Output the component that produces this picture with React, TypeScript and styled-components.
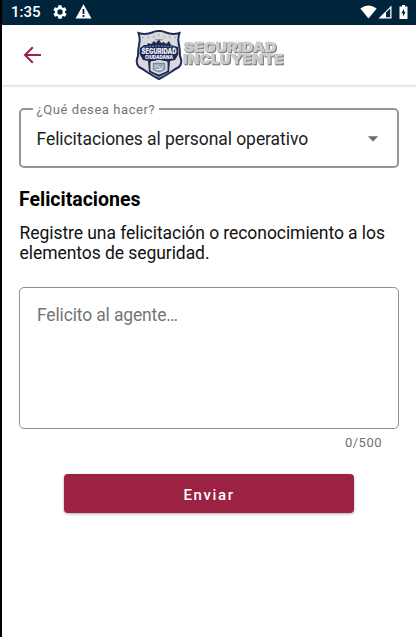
import React from "react";
import styled, { createGlobalStyle } from "styled-components";

const GlobalStyle = createGlobalStyle`
  * { box-sizing: border-box; }
  body { margin: 0; background: #fff; font-family: Roboto, "Liberation Sans", sans-serif; }
`;

const Screen = styled.div`
  width: 100%;
  height: 637px;
  border-left: 2px solid #000;
  background: #fff;
  overflow: hidden;
`;

const StatusBar = styled.header`
  display: flex;
  justify-content: space-between;
  height: 25px;
  padding: 0 8px 0 9px;
  background: #00243b;
  color: #fff;
`;

const StatusGroup = styled.div`
  display: flex;
  align-items: center;
  height: 24px;
`;

const Clock = styled.span`
  width: 41px;
  font-size: 15px;
  font-weight: 500;
  line-height: 26px;
`;

const StatusIcon = styled.svg<{ $gap?: number }>`
  display: block;
  flex: none;
  margin-left: ${(p) => p.$gap ?? 0}px;
  fill: #fff;
`;

const AppBar = styled.nav`
  display: grid;
  grid-template-columns: 133px 152px 1fr;
  height: 60px;
  background: #fff;
  box-shadow: 0 1px 2px rgba(0, 0, 0, 0.2);
`;

const BackButton = styled.button`
  display: flex;
  align-items: center;
  padding: 0 0 0 21px;
  border: 0;
  background: none;
`;

const Logo = styled.svg`
  display: block;
  font-family: Inter, "Liberation Sans", sans-serif;
`;

const Wordmark = styled.g`
  font-size: 13.6px;
  font-weight: 900;
  fill: #cbcccf;
  stroke: #c6c7c9;
  stroke-width: 0.4px;
  filter: drop-shadow(1px 1px 0 #707070);
`;

const Form = styled.main`
  display: flex;
  flex-direction: column;
  padding: 17px 17px 0;
`;

const SelectField = styled.fieldset`
  height: 66px;
  min-width: 0;
  margin: 0;
  padding: 0 18px 0 15.5px;
  border: 2px solid #969696;
  border-radius: 5px;
`;

const FieldLabel = styled.legend`
  margin-left: -4px;
  padding: 0 4px;
  height: 14px;
  font-size: 13px;
  line-height: 15px;
  letter-spacing: 0.57px;
  color: #747474;
`;

const SelectRow = styled.div`
  display: flex;
  align-items: center;
  justify-content: space-between;
  height: 45px;
`;

const SelectValue = styled.span`
  font-size: 17.5px;
  line-height: 22px;
  letter-spacing: -0.07px;
  white-space: nowrap;
  color: #212121;
`;

const Heading = styled.h1`
  margin: 20px 0 0;
  font-size: 19.5px;
  font-weight: 700;
  line-height: 24px;
  color: #000;
`;

const Description = styled.p`
  margin: 11px 0 0;
  padding-left: 0.5px;
  font-size: 17.5px;
  line-height: 20.3px;
  letter-spacing: -0.06px;
  white-space: nowrap;
  color: #111;
`;

const MessageField = styled.textarea`
  display: block;
  width: 100%;
  height: 142px;
  margin: 23.4px 0 0;
  padding: 16px 17px;
  border: 1px solid #919191;
  border-radius: 5px;
  outline: 0;
  resize: none;
  font: 17.5px/22px Roboto, sans-serif;
  letter-spacing: -0.15px;
  &::placeholder { color: #747474; opacity: 1; }
`;

const Counter = styled.span`
  align-self: flex-end;
  margin: 5px 17px 0 0;
  font-size: 13px;
  line-height: 17px;
  letter-spacing: 0.5px;
  color: #707070;
`;

const SubmitButton = styled.button`
  align-self: center;
  width: 290px;
  height: 39px;
  margin: 23px 0 0;
  padding: 3px 0 0;
  border: 0;
  border-radius: 4px;
  background: #9b2242;
  box-shadow: 0 1px 3px rgba(0, 0, 0, 0.32);
  color: #fff;
  font: 500 15px/20px Roboto, sans-serif;
  letter-spacing: 1.6px;
`;

const shield =
  "M3.5 8 Q11 10 17 7.5 Q21 5.5 24 6 Q27 5.5 31 7.5 Q37 10 44.5 8 Q42.5 14 44 20 Q45 25 45 31 Q48 38 44 42 Q40 44 36 47 Q30 51 24 54 Q18 51 12 47 Q8 44 4 42 Q0 38 3 31 Q3 25 4 20 Q5.5 14 3.5 8Z";

function BrandLogo() {
  return (
    <Logo width="152" height="60" viewBox="0 0 152 60" aria-label="Seguridad Incluyente">
      <path d={shield} fill="#d8d8dd" stroke="#202a55" strokeWidth="2" />
      <path d="M5 23 L9 20 L12 20 L13 18 L16 19 L19 16 L21 18 L24 14 L26 18 L29 17 L31 19 L34 16 L36 20 L43 22 L43.5 29 L40 35 L35 36 L34 47 L24 52 L14 47 L13 36 L8 35 L4.500 29Z" fill="#1d2a58" />
      <path d="M7 12.500 Q16 13 24 10 Q32 13 41 12.500" fill="none" stroke="#a9a2a6" strokeWidth="1.500" strokeDasharray="1.500 4" />
      <rect x="20" y="14.300" width="8" height="1" fill="#8c8e9b" />
      <path d="M8 22.500 Q24 19.500 40 22.500" fill="none" stroke="#8790ac" strokeWidth="1" strokeDasharray="2 1" />
      <path d="M16 37 Q24 34 32 37 L32 45.500 Q28 47.500 24 49 Q20 47.500 16 45.500Z" fill="#c4ccd5" stroke="#eef0f3" strokeWidth="1" />
      <path d="M18.500 38.500h11v6l-5.500 2.500-5.500-2.500z" fill="#9ba8b8" stroke="#63718b" strokeWidth=".7" />
      <path d="M19.500 42q3-3 4.500 0t4.500-1M20.500 44.500h7" fill="none" stroke="#e3e7eb" />
      <g fill="#eceef3" fontWeight="900">
        <text x="6.500" y="28.700" fontSize="7" textLength="35" lengthAdjust="spacingAndGlyphs">SEGURIDAD</text>
        <text x="10" y="33.500" fontSize="5.300" textLength="28" lengthAdjust="spacingAndGlyphs">CIUDADANA</text>
      </g>
      <Wordmark>
        <text x="48.500" y="27" textLength="93" lengthAdjust="spacingAndGlyphs">SEGURIDAD</text>
        <text x="48" y="38.700" textLength="100.500" lengthAdjust="spacingAndGlyphs">INCLUYENTE</text>
      </Wordmark>
    </Logo>
  );
}

export default function App() {
  return (
    <>
      <GlobalStyle />
      <Screen>
        <StatusBar>
          <StatusGroup>
            <Clock>1:35</Clock>
            <StatusIcon width="16" height="16" viewBox="0 0 24 24">
              <path d="M19.4 13a7.8 7.8 0 0 0 0-2l2.1-1.7a.5.5 0 0 0 .1-.6l-2-3.5a.5.5 0 0 0-.6-.2l-2.5 1a7.3 7.3 0 0 0-1.7-1l-.4-2.6a.5.5 0 0 0-.5-.4h-4a.5.5 0 0 0-.5.4L9 5a7.3 7.3 0 0 0-1.7 1l-2.5-1a.5.5 0 0 0-.6.2l-2 3.5a.5.5 0 0 0 .1.6L4.5 11a7.8 7.8 0 0 0 0 2l-2.1 1.7a.5.5 0 0 0-.1.6l2 3.5c.1.2.4.3.6.2l2.5-1A7.3 7.3 0 0 0 9 19l.4 2.6c0 .2.2.4.5.4h4c.3 0 .5-.2.5-.4L15 19a7.3 7.3 0 0 0 1.7-1l2.5 1c.2.1.5 0 .6-.2l2-3.500a.5.5 0 0 0-.1-.6zM12 8a4 4 0 1 1 0 8 4 4 0 0 1 0-8z" fillRule="evenodd" />
            </StatusIcon>
            <StatusIcon $gap={7} width="17" height="16" viewBox="0 0 17 16">
              <path fillRule="evenodd" d="M8.500.3 16.500 14.500H.5zM7.600 5v5h1.800V5zm0 6v2h1.800v-2z" />
            </StatusIcon>
          </StatusGroup>
          <StatusGroup>
            <StatusIcon width="17" height="14" viewBox="0 0 17 14">
              <path d="M.3 3.400Q8.500-2.200 16.700 3.400L8.500 13.400z" />
            </StatusIcon>
            <StatusIcon $gap={1} width="14" height="14" viewBox="0 0 14 14">
              <path fillRule="evenodd" d="M.5 13.500 13.500.5v13zM8 7.500v4.800h4.200V3.500z" />
            </StatusIcon>
            <StatusIcon $gap={7} width="9" height="14" viewBox="0 0 9 14">
              <path fillRule="evenodd" d="M3 0h3v1.500h2.500V14H.5V1.500H3zM5 3.700 2.300 8.300H4v3.200l2.700-4.700H5z" />
            </StatusIcon>
          </StatusGroup>
        </StatusBar>
        <AppBar>
          <BackButton aria-label="Volver">
            <svg width="19" height="18" viewBox="0 0 19 18" fill="none" stroke="#9b2242" strokeWidth="2">
              <path d="M18 9H2M9.800 1.200 2 9l7.800 7.800" />
            </svg>
          </BackButton>
          <BrandLogo />
        </AppBar>
        <Form>
          <SelectField>
            <FieldLabel>¿Qué desea hacer?</FieldLabel>
            <SelectRow>
              <SelectValue>Felicitaciones al personal operativo</SelectValue>
              <svg width="12" height="6" viewBox="0 0 12 6" fill="#6d6d6d">
                <path d="M.8.3h10.400L6 5.500z" />
              </svg>
            </SelectRow>
          </SelectField>
          <Heading>Felicitaciones</Heading>
          <Description>
            Registre una felicitación o reconocimiento a los
            <br />
            elementos de seguridad.
          </Description>
          <MessageField placeholder="Felicito al agente…" />
          <Counter>0/500</Counter>
          <SubmitButton>Enviar</SubmitButton>
        </Form>
      </Screen>
    </>
  );
}
